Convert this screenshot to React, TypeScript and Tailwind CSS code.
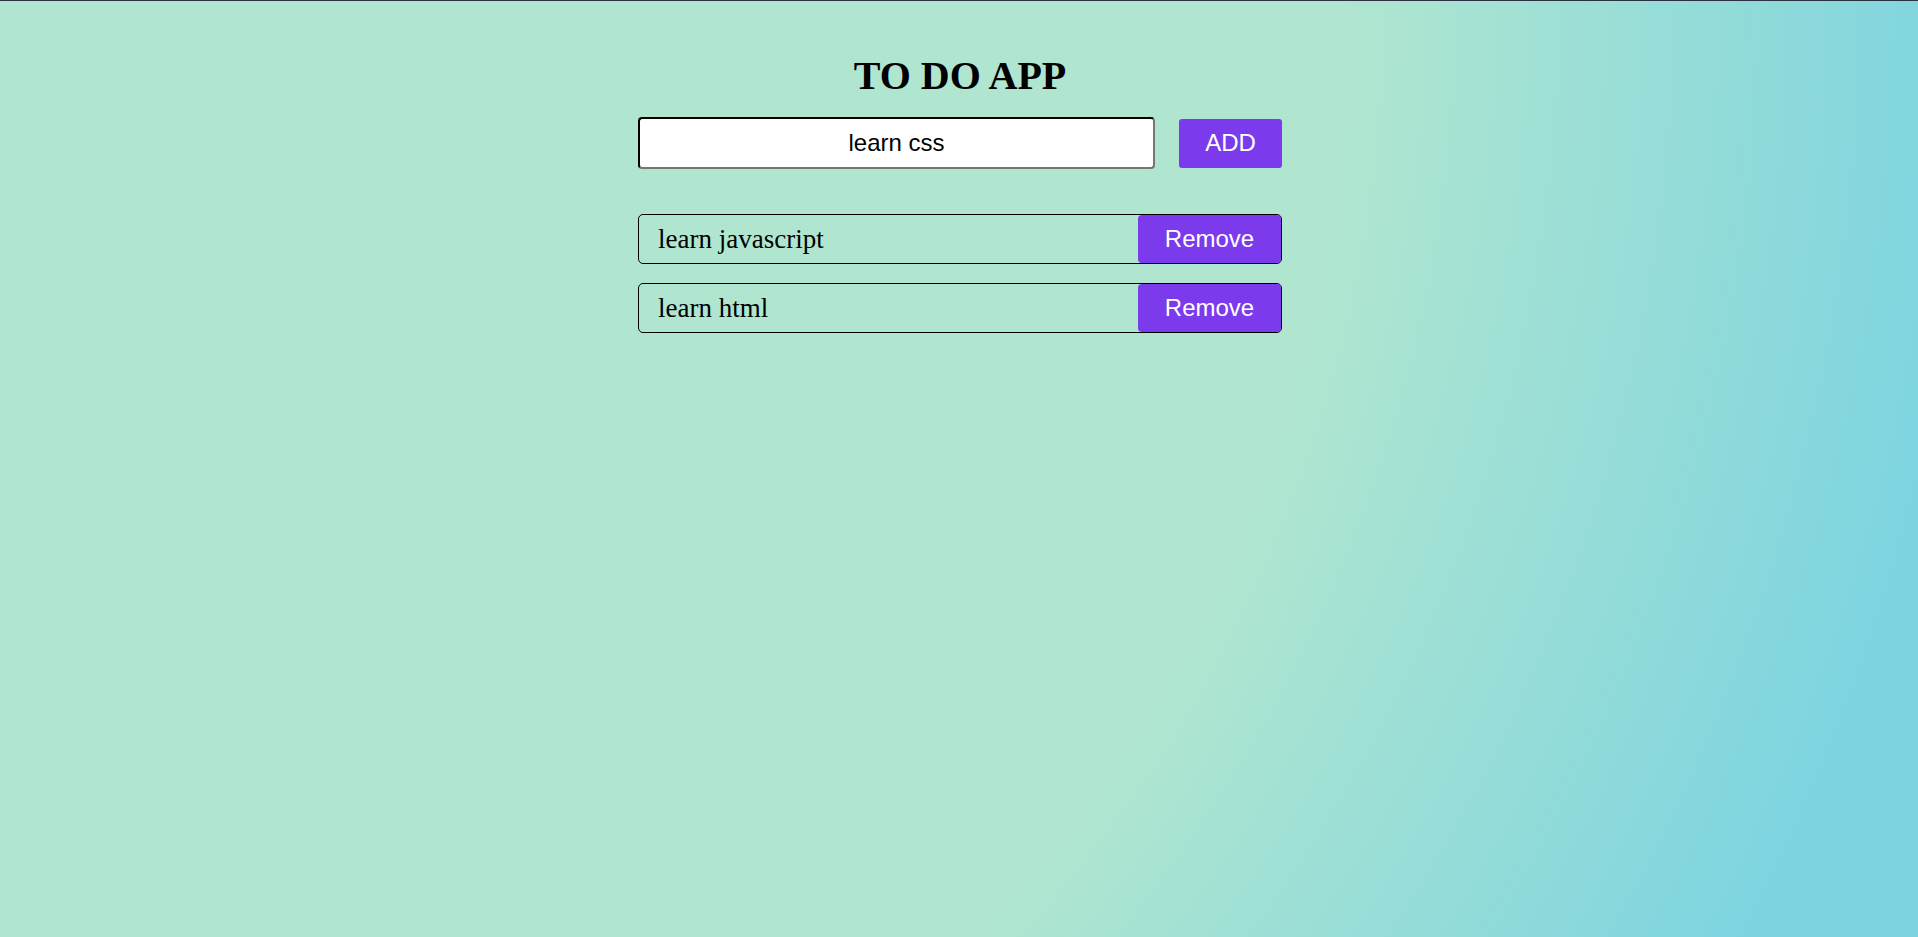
import React, { useState } from "react";

const App: React.FC = () => {
  const [text, setText] = useState("learn css");
  const [todos, setTodos] = useState<string[]>(["learn javascript", "learn html"]);

  const addTodo = () => {
    if (!text.trim()) return;
    setTodos([...todos, text.trim()]);
    setText("");
  };

  const removeTodo = (i: number) => setTodos(todos.filter((_, idx) => idx !== i));

  return (
    <div className="min-h-screen w-full border-t border-[#2b3140] bg-[radial-gradient(circle_farthest-corner_at_top_left,#b0e6d0_63%,#7dd4e0_93%)] font-['Liberation_Serif',serif]">
      <div className="mx-auto w-[644px] translate-x-[1px] pt-[52px]">
        <h1 className="text-center text-[40px] font-bold leading-[45px] text-black">TO DO APP</h1>

        {/* input row */}
        <div className="mt-[19px] flex items-center gap-[24px]">
          <input
            value={text}
            onChange={(e) => setText(e.target.value)}
            className="h-[52px] w-[517px] rounded-[4px] border-2 border-t-black border-l-black border-b-[#767676] border-r-[#767676] bg-white text-center font-['Liberation_Sans',sans-serif] text-[24px] text-black outline-none"
          />
          <button
            onClick={addTodo}
            className="h-[49px] w-[103px] rounded-[3px] bg-[#7c3aed] font-['Liberation_Sans',sans-serif] text-[24px] text-white"
          >
            ADD
          </button>
        </div>

        {/* list */}
        <ul className="mt-[45px] flex flex-col gap-[19px]">
          {todos.map((t, i) => (
            <li
              key={t + i}
              className="flex h-[50px] items-center justify-between rounded-[5px] border border-black pl-[19px]"
            >
              <span className="text-[27px] text-black">{t}</span>
              <button
                onClick={() => removeTodo(i)}
                className="h-full w-[143px] rounded-[4px] bg-[#7c3aed] font-['Liberation_Sans',sans-serif] text-[24px] text-white"
              >
                Remove
              </button>
            </li>
          ))}
        </ul>
      </div>
    </div>
  );
};

export default App;
